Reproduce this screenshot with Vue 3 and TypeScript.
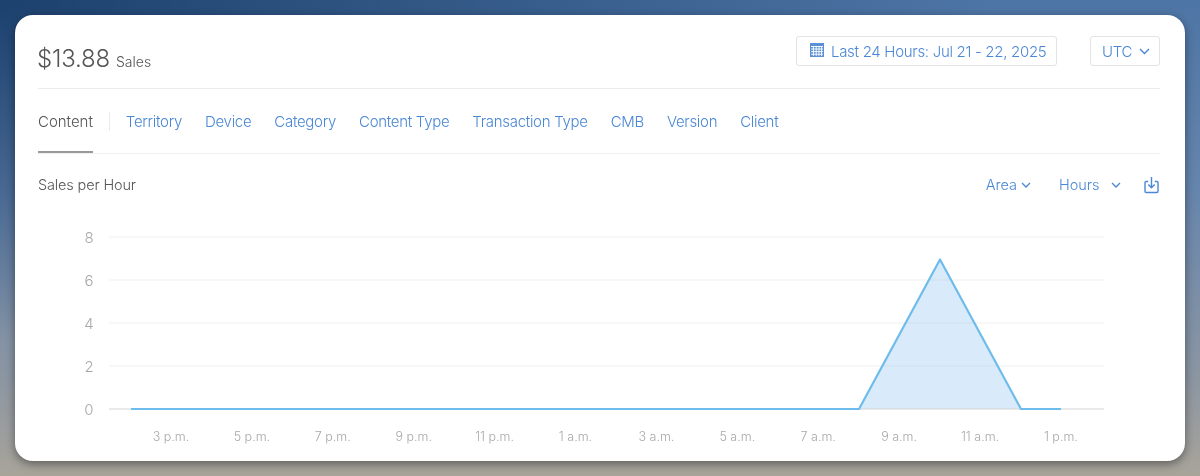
<script setup lang="ts">
const tabs: string[] = ['Territory', 'Device', 'Category', 'Content Type', 'Transaction Type', 'CMB', 'Version', 'Client']
const yTicks = [8, 6, 4, 2, 0]
const xLabels = ['3 p.m.', '5 p.m.', '7 p.m.', '9 p.m.', '11 p.m.', '1 a.m.', '3 a.m.', '5 a.m.', '7 a.m.', '9 a.m.', '11 a.m.', '1 p.m.']
const yOf = (v: number): number => 184 - v * 21.5
const xOf = (i: number): number => 31 + i * 80.9
</script>

<template>
  <div class="page">
    <section class="card">
      <header class="top">
        <div class="total"><span class="amount">$13.88</span><span class="unit">Sales</span></div>
        <div class="top-actions">
          <button class="pill date">
            <svg width="14" height="14" viewBox="0 0 14 14" class="cal">
              <path d="M0 0h14v14H0z" fill="#5b8fd6" />
              <path d="M1 3.5h12M1 6h12M1 8.6h12M1 11.2h12M3.4 3v10M6.2 3v10M9 3v10M11.6 3v10" stroke="#fff" stroke-width="0.9" fill="none" />
            </svg>
            Last 24 Hours: Jul 21 - 22, 2025
          </button>
          <button class="pill utc">
            UTC
            <svg width="11" height="7" viewBox="0 0 11 7"><path d="M1 1l4.5 4.5L10 1" stroke="#4a87d6" stroke-width="1.4" fill="none" /></svg>
          </button>
        </div>
      </header>

      <nav class="tabs">
        <span class="tab active">Content</span>
        <span class="sep"></span>
        <span v-for="t in tabs" :key="t" class="tab">{{ t }}</span>
      </nav>

      <div class="subhead">
        <span class="title">Sales per Hour</span>
        <div class="controls">
          <span class="ctl area">Area
            <svg width="10" height="6" viewBox="0 0 10 6"><path d="M1 1l4 4 4-4" stroke="#4a87d6" stroke-width="1.3" fill="none" /></svg>
          </span>
          <span class="ctl hours">Hours
            <svg width="10" height="6" viewBox="0 0 10 6"><path d="M1 1l4 4 4-4" stroke="#4a87d6" stroke-width="1.3" fill="none" /></svg>
          </span>
          <svg class="dl" width="15" height="18" viewBox="0 0 15 18">
            <path d="M4.2 5.5H2.2a1.2 1.2 0 0 0-1.2 1.2v8.600A1.2 1.2 0 0 0 2.2 16.5h10.600a1.2 1.2 0 0 0 1.2-1.2V6.700a1.2 1.2 0 0 0-1.200-1.200h-2" stroke="#4a87d6" stroke-width="1.4" fill="none" />
            <path d="M7.500 1v10.500M4.300 8.500l3.200 3.200 3.200-3.200" stroke="#4a87d6" stroke-width="1.400" fill="none" />
          </svg>
        </div>
      </div>

      <svg class="chart" width="1170" height="236" viewBox="0 0 1170 236">
        <g transform="translate(-15 0)">
          <path d="M859 184L940 34.500L1021 184Z" fill="#d9ebfa" />
          <g v-for="v in yTicks" :key="v">
            <line x1="109" x2="1104" :y1="yOf(v)" :y2="yOf(v)" :stroke="v === 0 ? '#d3d3d6' : '#b9b9c0'" :stroke-opacity="v === 0 ? 1 : 0.22" stroke-width="1" />
            <text x="89" :y="yOf(v) + 5.500" text-anchor="middle" class="ytick">{{ v }}</text>
          </g>
          <text v-for="(l, i) in xLabels" :key="l + i" :x="xOf(i) + 140" y="216" text-anchor="middle" class="xtick">{{ l }}</text>
          <path d="M131 184H859L940 34.500L1021 184H1061" fill="none" stroke="#6dbcec" stroke-width="2.2" stroke-linejoin="round" />
        </g>
      </svg>
    </section>
  </div>
</template>

<style>
html, body { margin: 0; padding: 0; }
</style>

<style scoped>
.page {
  width: 1200px;
  height: 476px;
  box-sizing: border-box;
  padding: 15px;
  overflow: hidden;
  font-family: Inter, "Liberation Sans", sans-serif;
  background:
    radial-gradient(ellipse 1000px 340px at 0 0, rgba(15, 50, 95, 0.78), rgba(15, 50, 95, 0)),
    linear-gradient(180deg, #4d75a5 0%, #6685ac 40%, #8a95a3 78%, #a8a49a 100%);
}
.card {
  width: 1170px;
  height: 446px;
  background: #fff;
  border-radius: 18px;
  box-shadow: 0 3px 10px rgba(0, 0, 0, 0.42);
  box-sizing: border-box;
  padding: 0 25px 0 23px;
  display: flex;
  flex-direction: column;
  position: relative;
  will-change: transform;
}
.top {
  height: 74px;
  box-sizing: border-box;
  border-bottom: 1px solid #ececee;
  display: flex;
  justify-content: space-between;
  align-items: flex-start;
}
.total { margin: 29px 0 0 -1px; display: flex; align-items: baseline; color: #555; }
.amount { font-size: 24px; font-weight: 300; letter-spacing: -0.2px; }
.unit { font-size: 14px; font-weight: 300; margin-left: 6px; }
.top-actions { display: flex; gap: 33px; margin-top: 21px; }
.pill {
  height: 30px;
  box-sizing: border-box;
  background: #fff;
  border: 1px solid #e3e3e6;
  border-radius: 3px;
  color: #4a87d6;
  font: 300 15px Inter, "Liberation Sans", sans-serif;
  display: flex;
  align-items: center;
  padding: 0;
}
.date { width: 261px; padding-left: 13px; gap: 7px; letter-spacing: -0.3px; }
.cal { margin-top: -3px; }
.utc { width: 70px; padding-left: 11px; gap: 7px; letter-spacing: -0.3px; }
.tabs {
  height: 65px;
  box-sizing: border-box;
  border-bottom: 1px solid #efeff1;
  display: flex;
  align-items: flex-start;
  position: relative;
  font-size: 15px;
  font-weight: 300;
  letter-spacing: -0.3px;
  padding-top: 22.500px;
}
.tab { color: #4a87d6; margin-right: 23px; line-height: 19px; white-space: nowrap; }
.tab.active { color: #555; margin-right: 16px; position: relative; height: 41.500px; letter-spacing: -0.02px; }
.tab.active::after {
  content: "";
  position: absolute;
  left: 0;
  right: 0;
  bottom: 0;
  height: 2px;
  background: #999;
}
.sep { width: 1px; height: 19px; background: #eaeaec; margin-right: 16px; }
.subhead {
  height: 32px;
  margin-top: 22px;
  display: flex;
  justify-content: space-between;
  align-items: flex-start;
  font-size: 14.500px;
  font-weight: 300;
}
.title { color: #555; line-height: 18px; letter-spacing: -0.15px; }
.controls { display: flex; align-items: flex-start; color: #4a87d6; }
.ctl { display: inline-flex; align-items: center; line-height: 18px; margin-top: -0.500px; }
.area { gap: 4px; margin-right: 28px; }
.hours { gap: 11px; margin-right: 23px; }
.dl { margin: 0 1.500px 0 0; }
.chart { display: block; margin: 17px 0 0 -23px; flex: none; overflow: visible; }
.ytick { font: 300 15px Inter, "Liberation Sans", sans-serif; fill: #a8a8ac; }
.xtick { font: 300 12.500px Inter, "Liberation Sans", sans-serif; fill: #a8a8ac; }
</style>
